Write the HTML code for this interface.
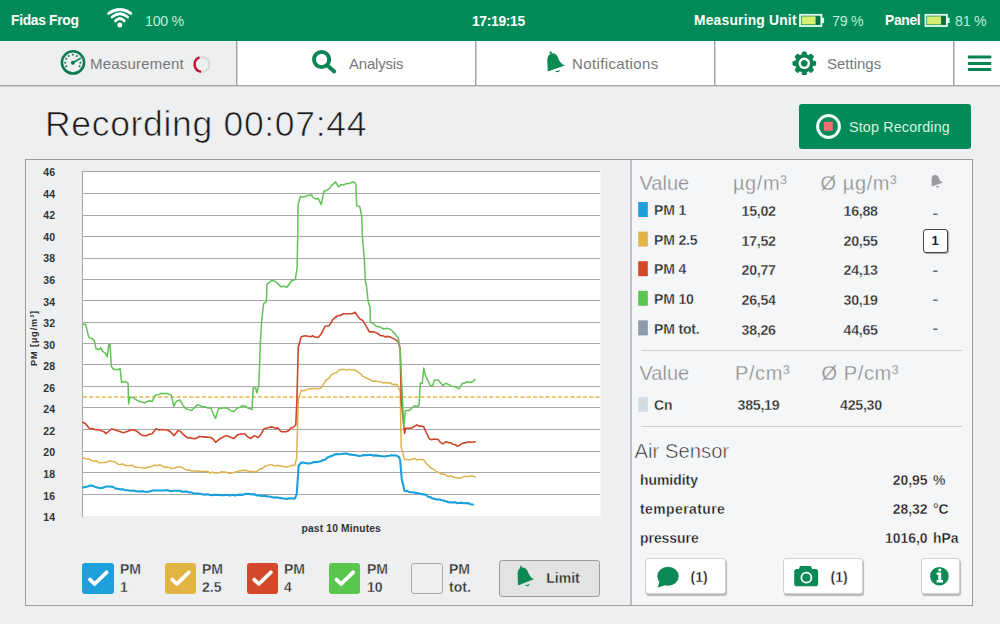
<!DOCTYPE html>
<html><head><meta charset="utf-8">
<style>
*{margin:0;padding:0;box-sizing:border-box}
html,body{width:1000px;height:624px;overflow:hidden;background:#eeeff1;font-family:"Liberation Sans",sans-serif;position:relative}
.a{position:absolute;white-space:nowrap}
#hdr{position:absolute;left:0;top:0;width:1000px;height:41px;background:#028a59}
.wt{color:#fff;font-weight:bold;font-size:13.8px;letter-spacing:-0.3px;top:12.6px}
.lt{color:#c4ecd2;font-size:14.2px;letter-spacing:-0.25px;top:13.2px}
#tabs{position:absolute;left:0;top:41px;width:1000px;height:45px;background:#fff;border-bottom:1px solid #a6a6a6;box-shadow:0 1px 0 #d2d2d4}
.tab{position:absolute;top:0;height:44px;border-right:1px solid #a2a2a2;box-shadow:1px 0 0 #d4d4d4}
.tt{color:#787878;font-size:15px;top:14.1px}
#title{left:45px;top:103.7px;font-size:35.5px;letter-spacing:0.68px;color:#1a1a1a;-webkit-text-stroke:0.7px #eeeff1}
#stop{position:absolute;left:799px;top:104px;width:172px;height:45px;background:#028a59;border-radius:3px}
#panel{position:absolute;left:25px;top:159px;width:948px;height:447px;border:1px solid #9c9c9c;background:#eeeff1}
#rp{position:absolute;left:632px;top:160px;width:340px;height:445px;background:#f5f6f8}
#div{position:absolute;left:630px;top:160px;width:2px;height:445px;background:#bdbfc3}
.yl{position:absolute;left:20px;width:35px;text-align:right;font-size:10.5px;font-weight:bold;color:#333}
.hd{font-size:20px;color:#8c8c8c;-webkit-text-stroke:0.3px #f5f6f8}
.sw{position:absolute;width:10px;height:15px}
.nm{font-size:14px;font-weight:bold;letter-spacing:-0.15px;color:#222;-webkit-text-stroke:0.35px #f5f6f8}
.vl{font-size:14.2px;font-weight:bold;letter-spacing:-0.25px;color:#222;-webkit-text-stroke:0.35px #f5f6f8}
.hr{position:absolute;left:641px;width:321px;height:1px;background:#cfcfd1}
.as{font-size:13.9px;font-weight:bold;color:#111;-webkit-text-stroke:0.35px #f5f6f8}
.btn{position:absolute;background:#fff;border:1px solid #d2d2d2;border-radius:3px;box-shadow:1px 2px 1px #b9b9b9}
.cb{position:absolute;top:562.8px;width:31.6px;height:31.3px;border-radius:3px}
.cl{position:absolute;top:559.7px;font-size:14px;font-weight:bold;line-height:18.7px;color:#2a2a2a;-webkit-text-stroke:0.35px #eeeff1}
</style></head><body>
<div id="hdr">
  <div class="a wt" style="left:11px">Fidas Frog</div>
  <svg class="a" style="left:0;top:0" width="200" height="41" viewBox="0 0 200 41">
    <g fill="none" stroke="#fff" stroke-width="2.9" stroke-linecap="round">
      <path d="M108.7,13.4 Q119.8,5.6 130.8,13.4"/>
      <path d="M112.1,17 Q119.8,10.6 127.6,17"/>
      <path d="M115.6,20.7 Q119.8,16.4 124.2,20.7"/>
    </g>
    <circle cx="119.8" cy="25.1" r="2.5" fill="#fff"/>
  </svg>
  <div class="a lt" style="left:145px">100 %</div>
  <div class="a wt" style="left:472px;top:14.1px">17:19:15</div>
  <div class="a wt" style="left:694px;letter-spacing:0.22px">Measuring Unit</div>
  <div class="a lt" style="left:832px">79 %</div>
  <div class="a wt" style="left:885px">Panel</div>
  <div class="a lt" style="left:955px">81 %</div>
  <svg class="a" style="left:0;top:0" width="1000" height="41" viewBox="0 0 1000 41">
    <g id="bat">
    <rect x="800" y="14.8" width="21.4" height="11.2" fill="none" stroke="#e8fff0" stroke-width="1.8"/>
    <rect x="801.6" y="16.4" width="14.4" height="8" fill="#d6ee6c"/>
    <rect x="815.6" y="16.4" width="4.2" height="8" fill="#0a6e3e"/>
    <rect x="821.7" y="17.8" width="2.4" height="5.2" fill="#e8fff0"/>
    </g>
    <use href="#bat" x="125.5" y="0"/>
  </svg>
</div>
<div id="tabs">
  <div class="tab" style="left:0;width:237px;background:#eeeff1"></div>
  <div class="tab" style="left:237px;width:239px"></div>
  <div class="tab" style="left:476px;width:239px"></div>
  <div class="tab" style="left:715px;width:239px"></div>
  <div class="a tt" style="left:90px;letter-spacing:0.2px">Measurement</div>
  <div class="a tt" style="left:349px;letter-spacing:-0.2px">Analysis</div>
  <div class="a tt" style="left:572px;letter-spacing:0.38px">Notifications</div>
  <div class="a tt" style="left:827px">Settings</div>
  <svg class="a" style="left:0;top:-41px" width="1000" height="90" viewBox="0 0 1000 90">
    <!-- gauge -->
    <circle cx="73" cy="62.4" r="11.1" fill="none" stroke="#0e7c50" stroke-width="2.6"/>
    <g fill="#0e7c50">
      <circle cx="68.7" cy="56" r="1"/><circle cx="72.8" cy="54.7" r="1"/><circle cx="76.8" cy="56" r="1"/>
      <circle cx="66.2" cy="58.7" r="1"/><circle cx="65.2" cy="62.7" r="1"/><circle cx="66.2" cy="66.2" r="1"/>
      <circle cx="80.4" cy="62.7" r="1"/><circle cx="79.6" cy="66.2" r="1"/>
      <circle cx="72.9" cy="62.7" r="2"/>
    </g>
    <line x1="72.9" y1="62.7" x2="80.4" y2="58.4" stroke="#0e7c50" stroke-width="1.6" stroke-linecap="round"/>
    <!-- spinner -->
    <circle cx="202" cy="64.4" r="7.4" fill="none" stroke="#dadada" stroke-width="2.2"/>
    <path d="M199.5,57.4 A7.4,7.4 0 0 0 201,71.7" fill="none" stroke="#c4122c" stroke-width="2.4"/>
    <!-- search -->
    <circle cx="321.6" cy="59.5" r="7.6" fill="none" stroke="#0b8352" stroke-width="3.9"/>
    <line x1="327.5" y1="65.6" x2="334.2" y2="71.4" stroke="#0b8352" stroke-width="4" stroke-linecap="round"/>
    <!-- bell -->
    <path d="M547.8,71.6 L547.3,61 Q547,54.5 551.5,53.4 Q556.5,53 558.3,58.2 Q559.8,63 564.9,65.6 Z" fill="#0b8a52"/>
    <circle cx="550.6" cy="52.6" r="1.2" fill="#0b8a52"/>
    <path d="M555.8,71.2 Q558,72.2 559.6,70.4" fill="none" stroke="#0b8a52" stroke-width="1.3"/>
    <!-- gear -->
    <g fill="#0b8352" transform="translate(804.3,63.3)">
      <circle r="9.2"/>
      <rect x="-2.6" y="-11.8" width="5.2" height="23.6" rx="1.6"/>
      <rect x="-2.6" y="-11.8" width="5.2" height="23.6" rx="1.6" transform="rotate(45)"/>
      <rect x="-2.6" y="-11.8" width="5.2" height="23.6" rx="1.6" transform="rotate(90)"/>
      <rect x="-2.6" y="-11.8" width="5.2" height="23.6" rx="1.6" transform="rotate(135)"/>
      <circle r="4.6" fill="none" stroke="#fff" stroke-width="2.4"/>
    </g>
    <!-- hamburger -->
    <g fill="#0b8352"><rect x="967.9" y="55.6" width="23.4" height="3" rx="0.6"/><rect x="967.9" y="62" width="23.4" height="3" rx="0.6"/><rect x="967.9" y="68" width="23.4" height="3" rx="0.6"/></g>
  </svg>
</div>
<div id="title" class="a">Recording 00:07:44</div>
<div id="stop">
  <svg class="a" style="left:-799px;top:-104px" width="1000" height="160" viewBox="0 0 1000 160">
    <circle cx="828.5" cy="126.5" r="10.9" fill="none" stroke="#f0fff6" stroke-width="3"/>
    <rect x="823.8" y="121.8" width="9" height="9" fill="#f46a6e"/>
  </svg>
  <div class="a" style="left:50px;top:14.6px;font-size:14.3px;letter-spacing:0.17px;color:#d8f5e0">Stop Recording</div>
</div>
<div id="panel"></div>
<div id="rp"></div>
<div id="div"></div>
<svg class="a" style="left:0;top:0" width="1000" height="624" viewBox="0 0 1000 624">
<rect x="82.5" y="171" width="518" height="345" fill="#fff"/>
<g stroke="#a8a8a8" stroke-width="1" shape-rendering="crispEdges"><line x1="82" y1="171.5" x2="600" y2="171.5"/><line x1="82" y1="193.5" x2="600" y2="193.5"/><line x1="82" y1="215.5" x2="600" y2="215.5"/><line x1="82" y1="236.5" x2="600" y2="236.5"/><line x1="82" y1="258.5" x2="600" y2="258.5"/><line x1="82" y1="279.5" x2="600" y2="279.5"/><line x1="82" y1="300.5" x2="600" y2="300.5"/><line x1="82" y1="322.5" x2="600" y2="322.5"/><line x1="82" y1="343.5" x2="600" y2="343.5"/><line x1="82" y1="364.5" x2="600" y2="364.5"/><line x1="82" y1="386.5" x2="600" y2="386.5"/><line x1="82" y1="407.5" x2="600" y2="407.5"/><line x1="82" y1="429.5" x2="600" y2="429.5"/><line x1="82" y1="451.5" x2="600" y2="451.5"/><line x1="82" y1="472.5" x2="600" y2="472.5"/><line x1="82" y1="494.5" x2="600" y2="494.5"/><line x1="82.5" y1="171" x2="82.5" y2="516.5"/></g>
<line x1="83" y1="397" x2="600" y2="397" stroke="#e2b648" stroke-width="1.3" stroke-dasharray="4,2.25"/>
<g fill="none" stroke-linejoin="round" stroke-linecap="round">
<polyline stroke="#dcb44c" stroke-width="1.5" points="82.9,457.7 85.77,458.67 88.63,458.93 91.5,460.6 93.82,460.98 96.14,460.66 98.46,462.44 100.78,462.82 103.1,462.5 105.33,462.57 107.57,461.93 109.8,460.6 112.45,461.55 115.1,461.8 117.75,464.15 120.4,464.4 122.8,463.95 125.2,465.6 127.6,465.85 130,465.4 132.57,465.33 135.13,467.37 137.7,467.3 140.27,467.63 142.83,467.97 145.4,468.3 147.7,467.02 150,467.14 152.3,465.86 154.6,465.28 156.9,465.4 159.3,465.07 161.7,465.45 164.1,467.22 166.5,466.9 169.07,467.37 171.63,468.53 174.2,468.3 177.1,466.9 180,466.9 182.3,467.68 184.6,469.16 186.9,469.94 189.2,470.02 191.5,470.8 193.82,470.88 196.14,470.96 198.46,471.04 200.78,471.82 203.1,471.2 205.4,471.58 207.7,471.26 210,473.04 212.3,472.02 214.6,473.1 216.92,472.9 219.24,472.7 221.56,471.8 223.88,472.3 226.2,472.1 229.05,473.3 231.9,473.1 234.6,472.33 237.3,471.57 240,470.8 242.9,470.5 245.8,470.2 248.65,471.4 251.5,471.2 254.4,471.9 257.3,471.2 259.87,468.87 262.43,468.63 265,466.3 267.9,465.35 270.8,464.4 273.37,465.43 275.93,465.77 278.5,465.4 281.07,465.9 283.63,466.4 286.2,466.9 289.07,466.4 291.93,465.2 294.8,465.4 296.7,457.7 298.3,400 301.2,390.6 304.05,390.8 306.9,389.6 309.8,388.45 312.7,388.7 315.57,388.37 318.43,388.73 321.3,387.7 323.75,383.85 326.2,380 328.73,378.47 331.27,374.83 333.8,373.3 336.37,372.7 338.93,370 341.5,369.4 344.07,369.4 346.63,370.1 349.2,369.4 351.47,369.73 353.73,370.07 356,370.4 358.23,372.33 360.47,373.57 362.7,376.2 365.27,377.47 367.83,378.73 370.4,380 372.97,381.2 375.53,381 378.1,381.5 380.5,381.85 382.9,382.9 385.3,382.55 387.7,382.9 390.1,382.68 392.5,384.55 394.9,384.32 397.3,384.8 400.2,391.5 401.2,447.3 404.6,459.6 407.2,459.4 409.8,459.9 412.4,459 414.64,458.42 416.88,459.94 419.12,459.36 421.36,459.48 423.6,459.6 426.45,463.7 429.3,466.4 431.76,468.66 434.22,469.52 436.68,471.78 439.14,472.64 441.6,474.2 443.83,474.07 446.07,475.33 448.3,476.6 450.53,475.77 452.77,477.03 455,477.6 457.25,477.9 459.5,478.2 461.77,477.63 464.03,476.37 466.3,476.5 468.52,476.6 470.75,476 472.98,476.1 475.2,476.9"/>
<polyline stroke="#d0452a" stroke-width="1.6" points="82.9,422.1 85.8,424 89.6,428.8 92.5,428.5 95.4,429.8 98.3,429.5 101.2,430.8 103.6,431.45 106,433.7 108.85,431.25 111.7,428.8 114.6,429.8 117.5,430.8 120.4,431.75 123.3,432.7 125.53,431.93 127.77,431.17 130,430.4 132.9,429.8 135.8,430.8 138.37,432.4 140.93,434.8 143.5,435.6 146.37,435.77 149.23,434.33 152.1,433.7 156,428.8 158.87,429.93 161.73,429.47 164.6,429.8 167.5,429.95 170.4,431.7 174.2,435.6 178.1,430.4 180.67,431.63 183.23,434.47 185.8,436.5 188.03,437.97 190.27,437.83 192.5,438.5 194.73,438.63 196.97,437.97 199.2,436.5 201.52,436.7 203.84,436.9 206.16,437.1 208.48,437.3 210.8,437.5 213.2,439.1 215.6,442.3 218,440.4 220.4,438.5 223.3,437.05 226.2,435.6 228.73,436.57 231.27,437.53 233.8,438.5 237.7,434.6 240.07,434.3 242.43,434 244.8,433.7 247.7,436.9 250.6,438.5 254.4,435.6 258.3,437.5 261.15,433.95 264,428.8 266.27,428.17 268.53,427.53 270.8,426.9 273.03,427.23 275.27,428.37 277.5,427.9 281.3,431.7 283.75,431.7 286.2,431.7 288.6,430.6 291,427.9 293.4,427.25 295.8,425 296.9,400 298.3,347.3 301.2,336.7 305,335.8 307.9,336.25 310.8,336.7 312.7,335.8 315.6,337.35 318.5,337.3 321.3,333.8 325.2,326.2 329,325.8 332.9,319.4 335.3,317.5 337.7,315.6 340.6,315.45 343.5,313.7 346.35,313.7 349.2,313.7 352.1,313.8 355,312.3 357.9,316.5 360.3,319.25 362.7,320.4 365.6,325.2 369.4,331.9 371.8,331.9 374.2,331.9 378.1,333.8 380.5,335.6 382.9,335.8 385.13,336.9 387.37,336.4 389.6,336.7 392.5,338.15 395.4,339.6 398.3,341.5 400.2,349.2 401.2,400 404.6,433.4 405.7,428.2 408.5,428.2 411.3,428.2 414.1,426.55 416.9,424.9 419.13,426.3 421.37,426.1 423.6,426.7 426.45,432.75 429.3,438.8 431.52,439.75 433.75,439.1 435.98,439.25 438.2,439.4 440.45,442.45 442.7,443.9 446.1,441.7 448.34,442.6 450.58,442.7 452.82,444.4 455.06,444.5 457.3,446.2 459.55,445.35 461.8,443.7 464.05,442.85 466.3,442.8 468.52,441.72 470.75,442.25 472.98,441.98 475.2,441.7"/>
<polyline stroke="#62c256" stroke-width="1.5" points="82.9,324.3 85.6,324.6 88.8,337.4 92,338.7 94.4,340.6 96,348.7 99.2,349.5 100.8,347.9 102.4,351.1 105.6,353.5 107.2,356.7 108.8,344.6 110.1,344.6 111.3,366.3 113.7,369.5 116.1,369.5 118.5,369.5 120.1,368.7 121.7,382.3 124.9,381.5 128.1,383.1 128.6,403.9 129.7,397.5 132.9,397.5 135.3,399.1 137.7,400.7 140.1,401.5 142.5,402.3 144.9,402.7 147.3,401.5 149.7,400.7 152.1,401.5 155.3,395.1 158.5,394.8 160.9,393.35 163.3,393.5 167.3,393.5 171.3,395.1 173.8,406.3 176.2,401.5 180,399.9 182.9,405.1 185.8,408.7 188.65,409.65 191.5,410.6 194.4,407.7 197.3,404.8 199.87,405.43 202.43,406.87 205,406.7 207.9,408 210.8,407.7 213.2,413.8 215.6,418.3 218.5,408.7 221.07,408.37 223.63,408.03 226.2,407.7 228.73,408.97 231.27,411.03 233.8,411.5 236.9,408.5 240,407.1 242.4,405.7 244.8,405.9 248.4,408.3 252,409.5 253.2,387.9 255.6,387.9 256.8,392.7 258.8,385.5 260.4,342.2 261.7,320.5 263.6,303.7 266.5,301.3 266.9,284.4 269.1,282.6 271.3,280.8 273.7,280.6 276.1,282 278.5,284.4 280.9,286.8 283.9,286.25 286.9,287.3 289.3,284.05 291.7,280.8 295.3,279.6 297.1,268.1 297.7,237.3 298.1,204.6 300.4,196.5 302.83,196.93 305.27,196.57 307.7,195.4 311.5,195 313.5,197.9 315.9,199 318.3,198.5 321.2,204.6 324,191.2 326.9,190.2 329.3,188.6 331.7,185.4 335.6,181.9 338.5,186.9 341.3,184.4 343.57,184.9 345.83,183.8 348.1,183.5 350.33,183.17 352.57,182.03 354.8,182.5 355.8,184.4 356.7,205.6 359.6,206.5 361.5,214.2 362.5,237.3 364.4,260.4 365.4,281.5 366.5,285.8 368.1,301.2 370,306.9 370.4,322.3 374.2,324.2 376.2,326.2 380,327.1 383.8,329 386.7,328.2 389.6,329 392.5,331 396.3,335.8 398.3,337.7 400.2,351.2 403.8,426.5 405.4,410.5 409.4,410.5 411.8,408.1 414.2,405.7 416.6,406.5 419,405.7 420.3,383.3 422.2,383.3 423.8,368 425.4,375.3 427.85,380.5 430.3,385.7 432.7,385.7 434.3,380.1 438.3,380.1 440.7,382.9 443.1,385.7 445.5,383.3 449.5,384.9 451.9,386.5 454.3,386.5 456.7,387.7 459.1,388.9 462.3,383.3 464.7,383.3 467.1,381.7 470.3,382.5 472.7,381.7 475.1,379.3"/>
<polyline stroke="#1aa0da" stroke-width="2.1" points="82.9,487.5 85.3,487.02 87.7,486.55 90.1,485.58 92.5,485.6 95.4,486.93 98.3,487.77 101.2,488.1 103.73,487.57 106.27,486.53 108.8,486.5 111.12,486.58 113.44,487.16 115.76,488.74 118.08,488.82 120.4,489.4 122.6,489.17 124.8,489.94 127,490.21 129.2,490.49 131.4,490.76 133.6,490.53 135.8,491.3 138.1,491.42 140.4,491.54 142.7,491.16 145,491.78 147.3,491.9 150.2,491.15 153.1,490.4 155.34,490.43 157.58,490.47 159.82,490.5 162.07,490.53 164.31,490.57 166.55,490.1 168.79,490.63 171.03,491.17 173.28,490.7 175.52,490.73 177.76,490.77 180,490.8 182.25,491.72 184.5,491.63 186.75,491.55 189,492.47 191.25,492.38 193.5,493.3 195.84,493.47 198.19,493.63 200.53,493.8 202.88,494.47 205.22,494.63 207.57,494.3 209.91,494.97 212.26,495.13 214.6,494.8 216.8,494.91 219,495.03 221.2,495.14 223.4,495.26 225.6,494.87 227.8,494.99 230,495.6 232.5,494.85 235,495.6 237.5,494.85 240,494.6 242.57,494.83 245.13,494.07 247.7,493.8 249.9,494.09 252.1,494.37 254.3,494.16 256.5,495.44 258.7,495.23 260.9,496.01 263.1,495.8 265.67,496.12 268.23,496.43 270.8,496.75 273.37,497.57 275.93,497.38 278.5,497.7 281.07,498.13 283.63,498.57 286.2,499 289.07,498.4 291.93,498.3 294.8,498.7 296.7,494.2 298.7,465.4 301.5,462.5 304.07,462.83 306.63,463.17 309.2,463.5 311.52,463.04 313.84,462.08 316.16,462.12 318.48,461.66 320.8,461.2 323.03,460.13 325.27,459.57 327.5,457.5 329.73,456.43 331.97,455.87 334.2,454.8 336.6,454.05 339,454.3 341.4,454.05 343.8,453.8 346.29,453.59 348.77,454.37 351.26,454.66 353.74,454.94 356.23,455.23 358.71,456.01 361.2,455.8 363.6,455.05 366,455.3 368.4,455.05 370.8,454.8 373.1,455.58 375.4,455.36 377.7,455.64 380,455.92 382.3,456.2 384.55,456.57 386.8,455.93 389.05,455.8 391.3,455.17 393.55,455.53 395.8,455.4 398.7,456.7 400.1,459.6 401.7,478.7 404.6,491 407.2,490.9 409.8,492.3 412.4,492.2 414.64,492.64 416.88,493.08 419.12,493.52 421.36,493.96 423.6,494.4 425.86,494.8 428.12,496.7 430.38,497.1 432.64,498.5 434.9,498.9 437.13,499.47 439.37,499.53 441.6,500.1 443.83,500.67 446.07,501.23 448.3,502.3 450.55,502.4 452.8,502.5 455.05,502.1 457.3,503.2 459.55,502.8 461.8,502.9 464.04,503.22 466.28,503.04 468.52,503.36 470.76,504.18 473,504.5"/>
</g></svg>
<div class="yl" style="top:166.1px">46</div>
<div class="yl" style="top:187.7px">44</div>
<div class="yl" style="top:209.2px">42</div>
<div class="yl" style="top:230.8px">40</div>
<div class="yl" style="top:252.4px">38</div>
<div class="yl" style="top:273.9px">36</div>
<div class="yl" style="top:295.5px">34</div>
<div class="yl" style="top:317.0px">32</div>
<div class="yl" style="top:338.6px">30</div>
<div class="yl" style="top:360.2px">28</div>
<div class="yl" style="top:381.7px">26</div>
<div class="yl" style="top:403.3px">24</div>
<div class="yl" style="top:424.8px">22</div>
<div class="yl" style="top:446.4px">20</div>
<div class="yl" style="top:468.0px">18</div>
<div class="yl" style="top:489.5px">16</div>
<div class="yl" style="top:511.1px">14</div>
<div class="a" style="left:33.5px;top:337.6px;transform:translate(-50%,-50%) rotate(-90deg);letter-spacing:0.9px;font-size:9.2px;font-weight:bold;color:#333">PM [µg/m³]</div>
<div class="a" style="left:301.5px;top:523.2px;letter-spacing:0.15px;font-size:10.3px;font-weight:bold;color:#333">past 10 Minutes</div>
<!-- checkboxes -->
<div class="cb" style="left:82.3px;background:#1ea0dc"></div>
<div class="cb" style="left:164.5px;background:#e2b443"></div>
<div class="cb" style="left:246.5px;background:#d4482a"></div>
<div class="cb" style="left:328.8px;background:#5ac64e"></div>
<div class="cb" style="left:411.2px;background:#eeeff1;border:1.5px solid #a8a8a8"></div>
<svg class="a" style="left:0;top:0" width="500" height="624" viewBox="0 0 500 624">
  <g fill="none" stroke="#fff" stroke-width="3.8" stroke-linecap="round" stroke-linejoin="round">
    <path d="M90,579.6 L94.6,584 L106.6,572.3"/>
    <path d="M172.2,579.6 L176.8,584 L188.8,572.3"/>
    <path d="M254.2,579.6 L258.8,584 L270.8,572.3"/>
    <path d="M336.5,579.6 L341.1,584 L353.1,572.3"/>
  </g>
</svg>
<div class="cl" style="left:120px">PM<br>1</div>
<div class="cl" style="left:202px">PM<br>2.5</div>
<div class="cl" style="left:284px">PM<br>4</div>
<div class="cl" style="left:367px">PM<br>10</div>
<div class="cl" style="left:449px">PM<br>tot.</div>
<div class="a" style="left:499px;top:560.2px;width:101px;height:36.4px;background:#e3e3e4;border:1.5px solid #9c9c9c;border-radius:3px"></div>
<svg class="a" style="left:0;top:0" width="1000" height="624" viewBox="0 0 1000 624">
  <path d="M518,585.4 L517.6,575 Q517.3,568.6 521.6,567.6 Q526.4,567.2 528.1,572.3 Q529.5,577 533.8,579.3 Z" fill="#0b8a52"/>
  <circle cx="521" cy="567" r="1.1" fill="#0b8a52"/>
  <path d="M525.6,585.2 Q527.8,586.2 529.2,584.4" fill="none" stroke="#0b8a52" stroke-width="1.3"/>
</svg>
<div class="a" style="left:546.3px;top:569.8px;font-size:14px;font-weight:bold;color:#222;-webkit-text-stroke:0.35px #e3e3e4">Limit</div>
<!-- right panel table -->
<div class="a hd" style="left:639.5px;top:172.2px">Value</div>
<div class="a hd" style="left:733px;top:172.2px;letter-spacing:0.6px">µg/m³</div>
<div class="a hd" style="left:820.5px;top:172.2px;letter-spacing:0.6px">Ø µg/m³</div>
<svg class="a" style="left:0;top:0" width="1000" height="624" viewBox="0 0 1000 624">
  <path d="M931.8,186.6 L931.6,180 Q931.5,175.6 934.6,175 Q938,174.8 939,178.4 Q940,181.5 943,182.6 Z" fill="#9b9ba0"/><path d="M936.3,186.4 Q937.8,187.4 939,186" fill="none" stroke="#9b9ba0" stroke-width="1.2"/>
  <g id="sw">
  <rect x="638.2" y="202.0" width="9.6" height="15" fill="#1ea0dc"/>
  <rect x="638.2" y="231.6" width="9.6" height="15" fill="#e2b443"/>
  <rect x="638.2" y="261.2" width="9.6" height="15" fill="#d4482a"/>
  <rect x="638.2" y="290.8" width="9.6" height="15" fill="#5ac64e"/>
  <rect x="638.2" y="320.4" width="9.6" height="15" fill="#8a9bac"/>
  <rect x="638.2" y="397.1" width="9.6" height="14.6" fill="#d3dce3"/>
  </g>
</svg>
<div class="a nm" style="left:654px;top:202.1px">PM 1</div>
<div class="a nm" style="left:654px;top:231.7px">PM 2.5</div>
<div class="a nm" style="left:654px;top:261.3px">PM 4</div>
<div class="a nm" style="left:654px;top:290.9px">PM 10</div>
<div class="a nm" style="left:654px;top:320.5px">PM tot.</div>
<div class="a vl" style="left:741.5px;top:203.1px">15,02</div>
<div class="a vl" style="left:741.5px;top:232.7px">17,52</div>
<div class="a vl" style="left:741.5px;top:262.3px">20,77</div>
<div class="a vl" style="left:741.5px;top:291.9px">26,54</div>
<div class="a vl" style="left:741.5px;top:321.5px">38,26</div>
<div class="a vl" style="left:843.5px;top:203.1px">16,88</div>
<div class="a vl" style="left:843.5px;top:232.7px">20,55</div>
<div class="a vl" style="left:843.5px;top:262.3px">24,13</div>
<div class="a vl" style="left:843.5px;top:291.9px">30,19</div>
<div class="a vl" style="left:843.5px;top:321.5px">44,65</div>
<div class="a vl" style="left:932.5px;top:204.8px;transform:scaleX(1.3)">-</div>
<div class="a" style="left:922.5px;top:229.2px;width:25.2px;height:23.6px;border:1.4px solid #444;border-radius:3px;background:#fff;box-shadow:1px 1px 1px #aaa;font-size:13px;font-weight:bold;color:#222;text-align:center;line-height:21px">1</div>
<div class="a vl" style="left:932.5px;top:261.8px;transform:scaleX(1.3)">-</div>
<div class="a vl" style="left:932.5px;top:291.4px;transform:scaleX(1.3)">-</div>
<div class="a vl" style="left:932.5px;top:320.1px;transform:scaleX(1.3)">-</div>
<div class="hr" style="top:350px"></div>
<div class="a hd" style="left:639.5px;top:361.9px">Value</div>
<div class="a hd" style="left:735px;top:361.9px;letter-spacing:0.6px">P/cm³</div>
<div class="a hd" style="left:821.5px;top:361.9px;letter-spacing:0.6px">Ø P/cm³</div>
<div class="a nm" style="left:654px;top:397px">Cn</div>
<div class="a vl" style="left:737.5px;top:396.8px">385,19</div>
<div class="a vl" style="left:840px;top:396.8px">425,30</div>
<div class="hr" style="top:425.5px"></div>
<div class="a" style="left:634.5px;top:439.6px;font-size:20.3px;color:#1e1e1e;-webkit-text-stroke:0.6px #f5f6f8">Air Sensor</div>
<div class="a as" style="left:640px;top:471.9px">humidity</div>
<div class="a as" style="left:640px;top:500.9px;letter-spacing:0.45px">temperature</div>
<div class="a as" style="left:640px;top:530.4px">pressure</div>
<div class="a as" style="right:72.5px;top:471.9px">20,95</div>
<div class="a as" style="right:72.5px;top:500.9px">28,32</div>
<div class="a as" style="right:72.5px;top:530.4px">1016,0</div>
<div class="a as" style="left:933px;top:471.9px">%</div>
<div class="a as" style="left:933px;top:500.9px">°C</div>
<div class="a as" style="left:933px;top:530.4px">hPa</div>
<div class="btn" style="left:644.5px;top:558.3px;width:81px;height:35.6px"></div>
<div class="btn" style="left:783px;top:558.3px;width:80px;height:35.6px"></div>
<div class="btn" style="left:920.5px;top:558.3px;width:39px;height:35.6px"></div>
<svg class="a" style="left:0;top:0" width="1000" height="624" viewBox="0 0 1000 624">
  <ellipse cx="668" cy="576.3" rx="10.7" ry="9.5" fill="#0b8a55"/>
  <path d="M659.5,581.5 L657.7,587.4 L666,585" fill="#0b8a55"/>
  <rect x="794.2" y="569.1" width="23.9" height="17.1" rx="2.2" fill="#0b8a55"/>
  <path d="M798.7,570 L800,566 L811,566 L812.3,570 Z" fill="#0b8a55"/>
  <circle cx="806.4" cy="577.7" r="5" fill="none" stroke="#fff" stroke-width="1.8"/>
  <circle cx="939.4" cy="576.2" r="9.3" fill="#0b8a55"/>
  <circle cx="939.8" cy="570" r="1.6" fill="#fff"/>
  <path d="M936.6,572.6 L941.2,572.6 L941.2,580 L943,580 L943,582.4 L936.6,582.4 L936.6,580 L938.3,580 L938.3,574.8 L936.6,574.8 Z" fill="#fff"/>
</svg>
<div class="a" style="left:690.5px;top:569px;font-size:14px;font-weight:bold;color:#111;-webkit-text-stroke:0.35px #fff">(1)</div>
<div class="a" style="left:830.5px;top:569px;font-size:14px;font-weight:bold;color:#111;-webkit-text-stroke:0.35px #fff">(1)</div>
</body></html>
